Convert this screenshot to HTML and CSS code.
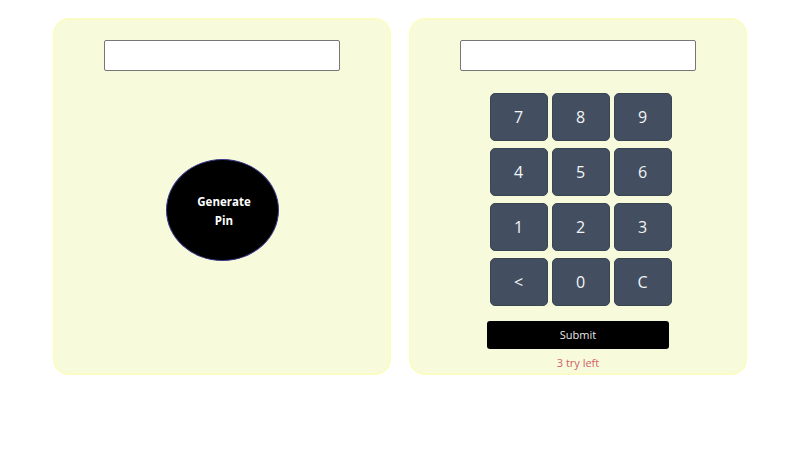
FILE: index.html
```html
<!DOCTYPE html>
<html lang="en">
<head>
<meta charset="utf-8">
<title>Pin Matcher</title>
<link rel="stylesheet" href="styles.css">
</head>
<body>
<main class="wrap">
  <section class="card card-gen">
    <input class="field" type="text">
    <button class="gen-btn">Generate<br>Pin</button>
  </section>
  <section class="card card-pad">
    <input class="field" type="text">
    <div class="keypad">
      <button class="key">7</button>
      <button class="key">8</button>
      <button class="key">9</button>
      <button class="key">4</button>
      <button class="key">5</button>
      <button class="key">6</button>
      <button class="key">1</button>
      <button class="key">2</button>
      <button class="key">3</button>
      <button class="key">&lt;</button>
      <button class="key">0</button>
      <button class="key">C</button>
    </div>
    <button class="submit">Submit</button>
    <p class="tries">3 try left</p>
  </section>
</main>
</body>
</html>
```

FILE: styles.css
```css
* { box-sizing: border-box; }
html, body { margin: 0; padding: 0; background: #ffffff; }
body { font-family: "Open Sans", "Noto Sans", sans-serif; }

.wrap {
  display: flex;
  justify-content: center;
  gap: 18px;
  padding-top: 18px;
}

.card {
  width: 338px;
  height: 357px;
  background: #f7fbdc;
  border: 2px solid #fafcc4;
  border-radius: 16px;
  display: flex;
  flex-direction: column;
  align-items: center;
  padding-top: 20px;
}

.field {
  width: 236px;
  height: 31px;
  border: 1px solid #767676;
  border-radius: 2px;
  background: #fff;
  flex: none;
}

.gen-btn {
  margin-top: 88px;
  width: 113px;
  height: 102px;
  border-radius: 50%;
  background: #000;
  border: 1px solid #3a3a8a;
  color: #fff;
  font-family: inherit;
  font-weight: 700;
  font-size: 11.5px;
  line-height: 19px;
  padding: 2px 0 0 4px;
}

.keypad {
  margin-top: 22px;
  display: grid;
  grid-template-columns: repeat(3, 58px);
  grid-auto-rows: 48px;
  column-gap: 4px;
  row-gap: 7px;
  margin-left: 5px;
}

.key {
  background: #434f60;
  border: 1px solid #3a4554;
  border-radius: 5px;
  color: #f2f4f6;
  font-family: inherit;
  font-size: 16px;
  padding: 0;
}

.submit {
  margin-top: 15px;
  width: 182px;
  height: 28px;
  background: #000;
  color: #e8e8e8;
  border: none;
  border-radius: 3px;
  font-family: inherit;
  font-size: 11px;
  padding: 0 0 1px;
}

.tries {
  margin: 6px 0 0;
  font-size: 11px;
  line-height: 15px;
  color: #d0606a;
}
```
